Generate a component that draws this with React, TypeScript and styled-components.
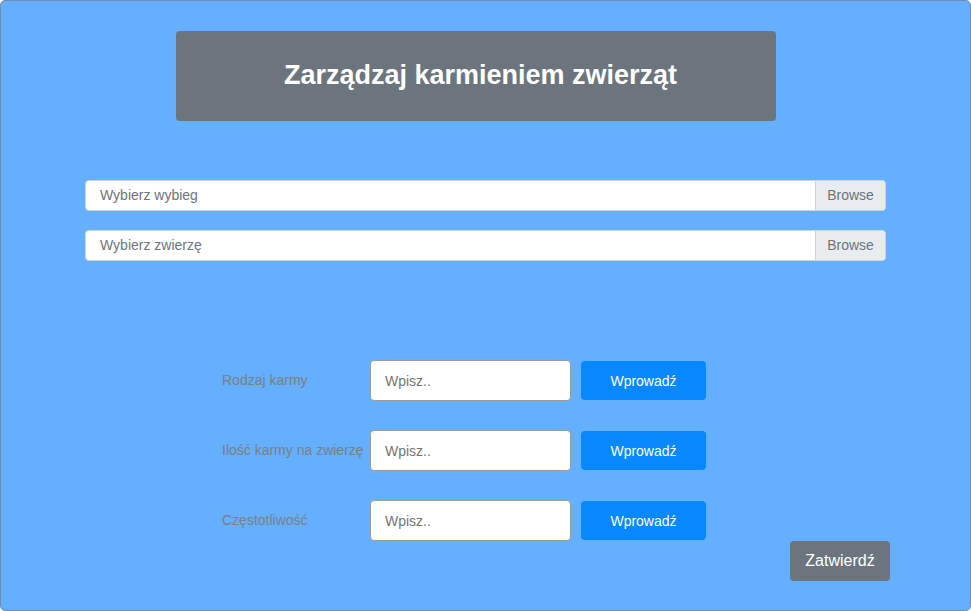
import React from "react";
import styled, { createGlobalStyle } from "styled-components";

const Global = createGlobalStyle`
  html, body { margin: 0; padding: 0; background: #ffffff; }
  body { font-family: "Liberation Sans", Arial, sans-serif; }
  * { box-sizing: border-box; }
`;

const Frame = styled.div`
  width: 971px;
  height: 611px;
  background: #64affe;
  border: 1px solid #6f8cbc;
  border-radius: 5px;
  padding-top: 30px;
  display: flex;
  flex-direction: column;
  overflow: hidden;
`;

const Header = styled.div`
  margin-left: 175px;
  width: 600px;
  height: 90px;
  background: #6c757d;
  border-radius: 4px;
  display: flex;
  align-items: center;
  justify-content: center;
  padding-bottom: 2px;
  padding-left: 9px;
`;

const Title = styled.h1`
  margin: 0;
  color: #ffffff;
  font-size: 27px;
  font-weight: 700;
  font-family: "Liberation Sans", Arial, sans-serif;
`;

const Files = styled.div`
  margin-top: 59px;
  margin-left: 84px;
  width: 801px;
  display: flex;
  flex-direction: column;
  gap: 19px;
`;

const FileBox = styled.div`
  height: 31px;
  display: flex;
  background: #ffffff;
  border: 1px solid #ced4da;
  border-radius: 4px;
  overflow: hidden;
`;

const FileLabel = styled.div`
  flex: 1;
  display: flex;
  align-items: center;
  padding-left: 14px;
  padding-bottom: 1px;
  font-size: 14px;
  color: #6c757d;
`;

const Browse = styled.div`
  width: 70px;
  display: flex;
  align-items: center;
  justify-content: center;
  padding-bottom: 1px;
  background: #e9ecef;
  border-left: 1px solid #ced4da;
  font-size: 14px;
  color: #6c757d;
`;

const Form = styled.div`
  margin-top: 99px;
  margin-left: 221px;
  display: flex;
  flex-direction: column;
  gap: 29px;
`;

const Row = styled.div`
  display: flex;
  align-items: center;
  height: 41px;
`;

const Label = styled.div`
  width: 148px;
  font-size: 14px;
  color: #7d7f83;
  white-space: nowrap;
  padding-bottom: 1px;
`;

const Input = styled.div`
  width: 201px;
  height: 41px;
  background: #ffffff;
  border: 1px solid #9a9a9a;
  border-radius: 4px;
  display: flex;
  align-items: center;
  padding-left: 14px;
  font-size: 14px;
  color: #757575;
`;

const BlueButton = styled.div`
  margin-left: 10px;
  width: 125px;
  height: 39px;
  background: #0888fe;
  border-radius: 4px;
  display: flex;
  align-items: center;
  justify-content: center;
  color: #ffffff;
  font-size: 14px;
`;

const Submit = styled.div`
  margin-left: 789px;
  width: 100px;
  height: 40px;
  background: #6c757d;
  border-radius: 4px;
  display: flex;
  align-items: center;
  justify-content: center;
  color: #ffffff;
  font-size: 16px;
`;

const rows = ["Rodzaj karmy", "Ilość karmy na zwierzę", "Częstotliwość"];

export default function App() {
  return (
    <>
      <Global />
      <Frame>
        <Header>
          <Title>Zarządzaj karmieniem zwierząt</Title>
        </Header>
        <Files>
          <FileBox>
            <FileLabel>Wybierz wybieg</FileLabel>
            <Browse>Browse</Browse>
          </FileBox>
          <FileBox>
            <FileLabel>Wybierz zwierzę</FileLabel>
            <Browse>Browse</Browse>
          </FileBox>
        </Files>
        <Form>
          {rows.map((r) => (
            <Row key={r}>
              <Label>{r}</Label>
              <Input>Wpisz..</Input>
              <BlueButton>Wprowadź</BlueButton>
            </Row>
          ))}
        </Form>
        <Submit>Zatwierdź</Submit>
      </Frame>
    </>
  );
}
